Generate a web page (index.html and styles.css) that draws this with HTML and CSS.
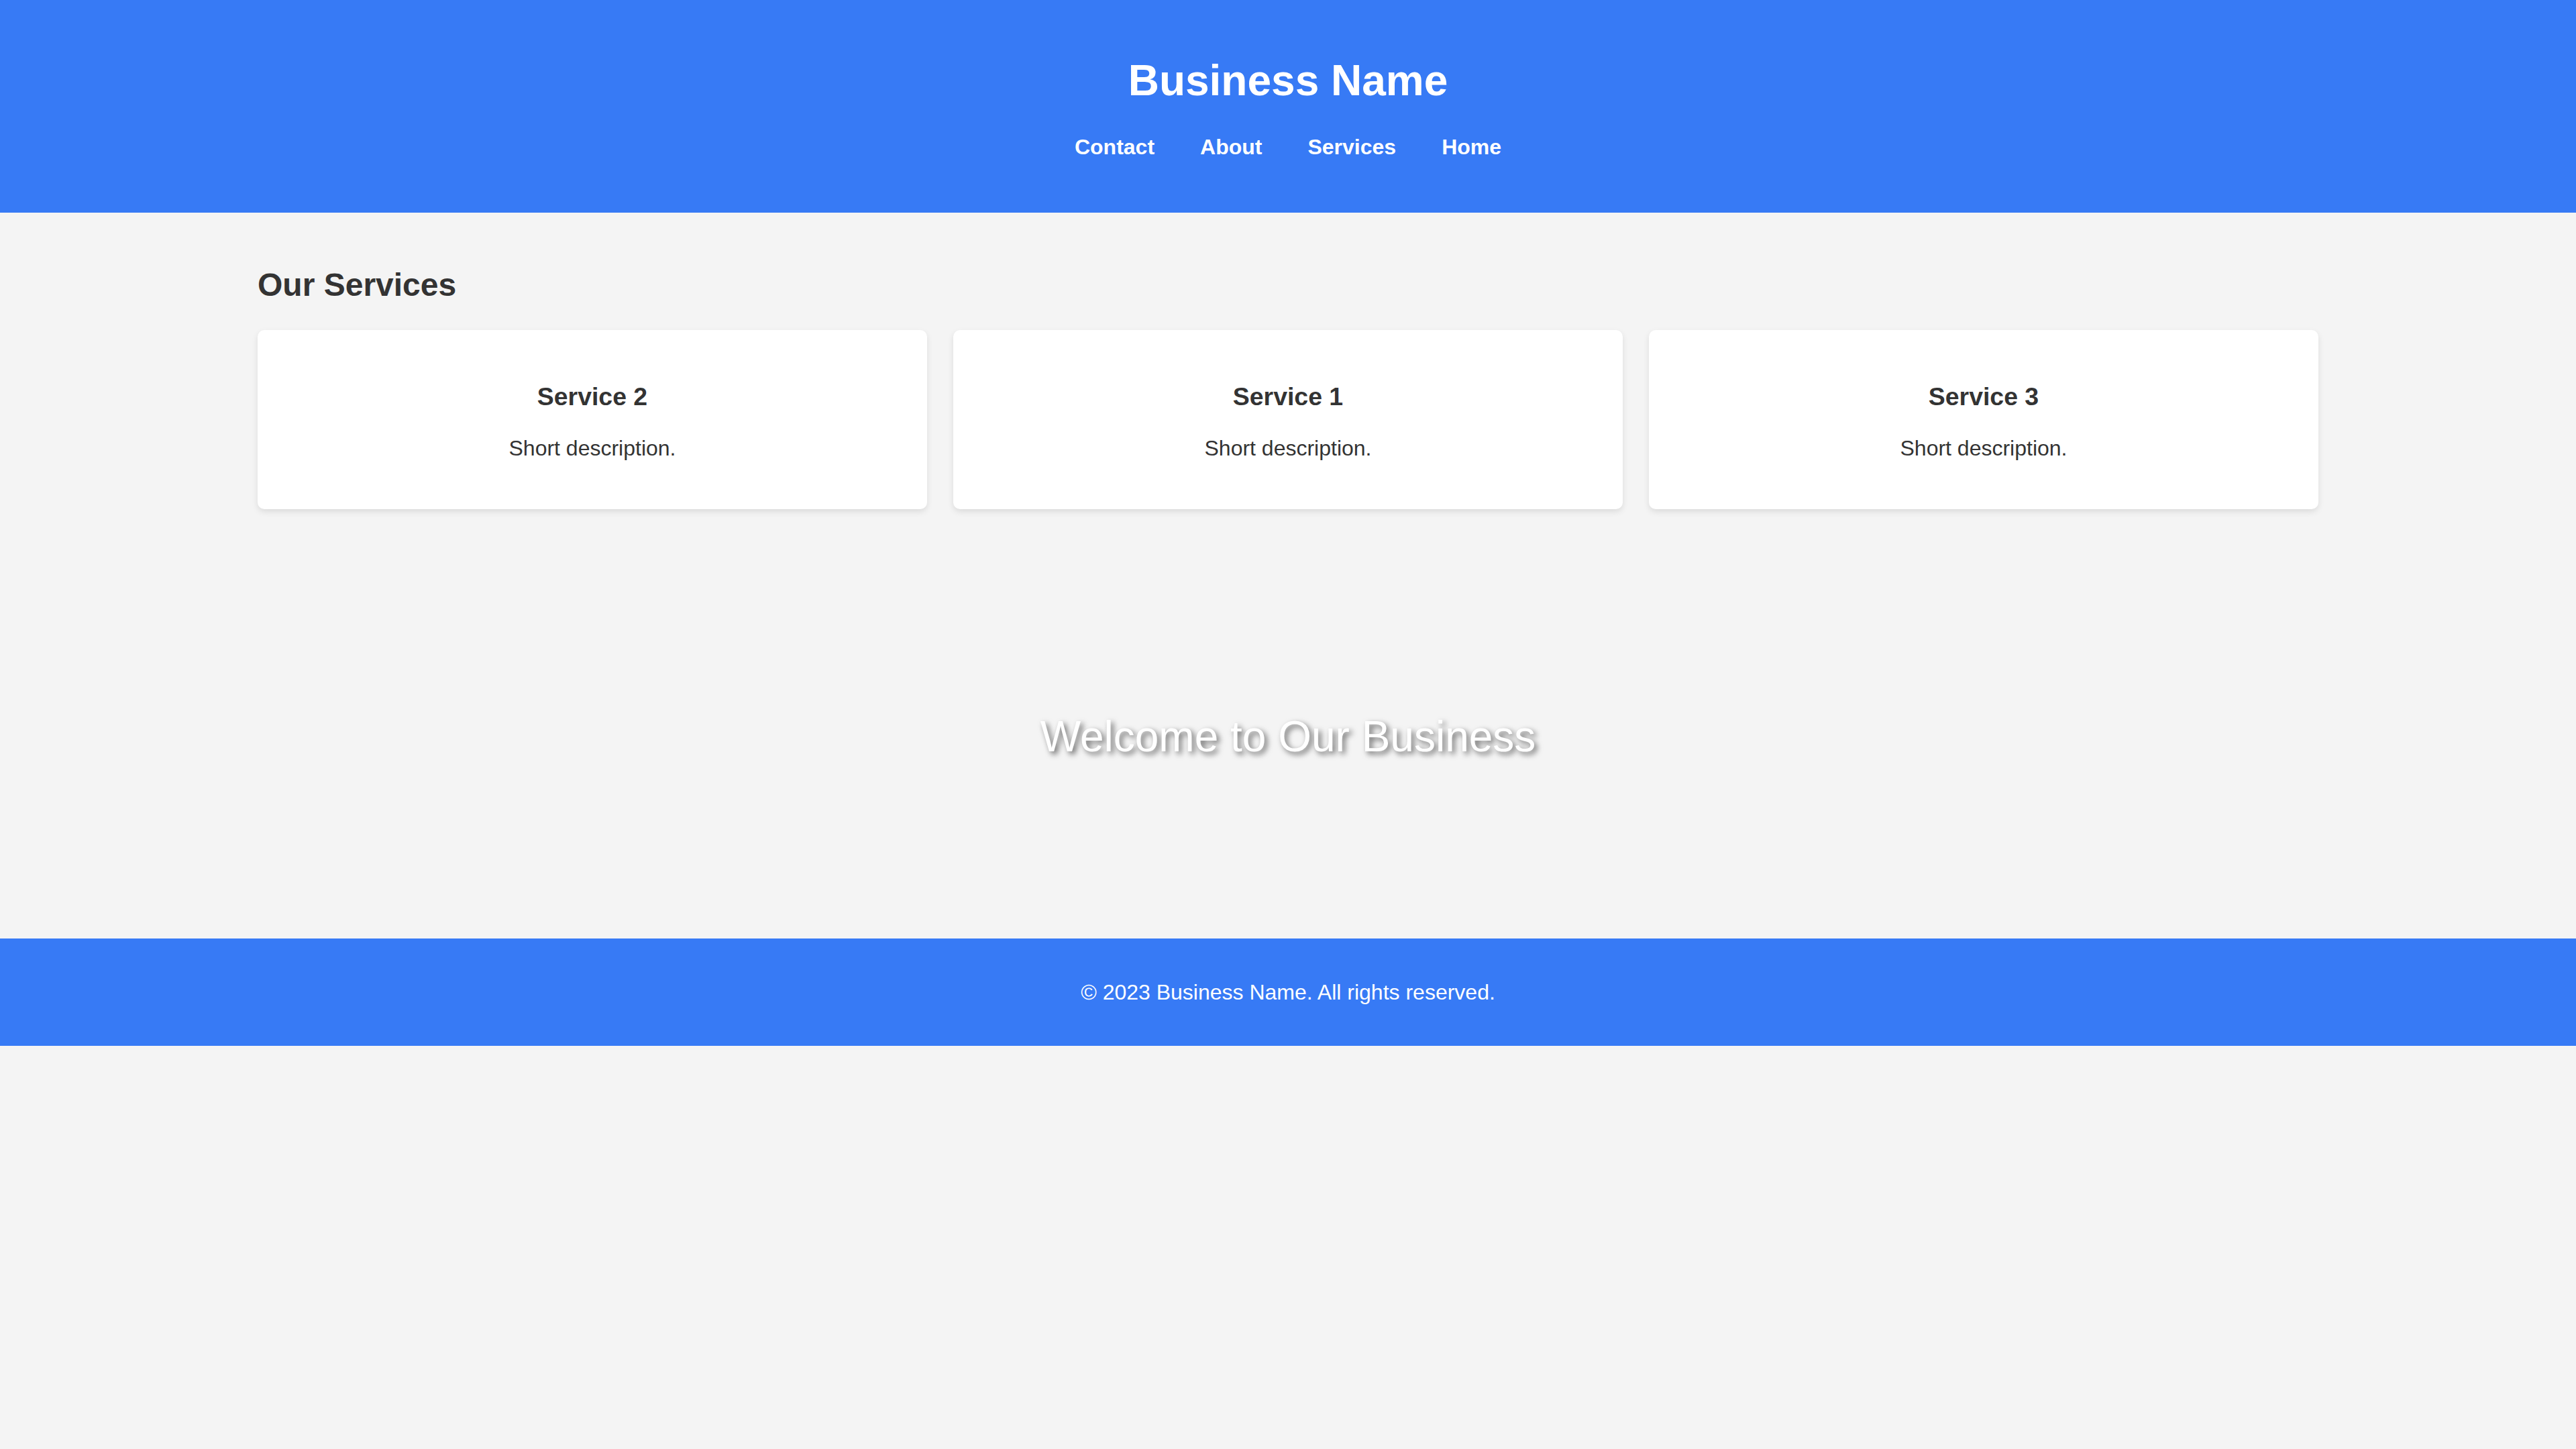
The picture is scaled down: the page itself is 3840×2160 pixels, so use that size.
FILE: index.html
```html
<!DOCTYPE html>
<html lang="en">
<head>
<meta charset="utf-8">
<title>Business Name</title>
<link rel="stylesheet" href="styles.css">
</head>
<body>
<header class="site-header">
  <h1 class="brand">Business Name</h1>
  <nav class="nav">
    <a class="nav-link" href="#contact">Contact</a>
    <a class="nav-link" href="#about">About</a>
    <a class="nav-link" href="#services">Services</a>
    <a class="nav-link" href="#home">Home</a>
  </nav>
</header>
<main class="main">
  <section class="services" id="services">
    <h2 class="section-title">Our Services</h2>
    <div class="cards">
      <div class="card">
        <h3 class="card-title">Service 2</h3>
        <p class="card-text">Short description.</p>
      </div>
      <div class="card">
        <h3 class="card-title">Service 1</h3>
        <p class="card-text">Short description.</p>
      </div>
      <div class="card">
        <h3 class="card-title">Service 3</h3>
        <p class="card-text">Short description.</p>
      </div>
    </div>
  </section>
  <section class="hero" id="home">
    <h2 class="hero-title">Welcome to Our Business</h2>
  </section>
</main>
<footer class="site-footer">
  <p class="footer-text">© 2023 Business Name. All rights reserved.</p>
</footer>
</body>
</html>
```

FILE: styles.css
```css
html, body {
  margin: 0;
  padding: 0;
}
body {
  background: #f4f4f4;
  color: #333;
  font-family: "Liberation Sans", Arial, sans-serif;
  font-size: 32px;
  min-height: 2160px;
}
.site-header {
  background: #377af5;
  color: #fff;
  text-align: center;
  padding: 41px 0 40px;
}
.brand {
  font-size: 64px;
  font-weight: 700;
  margin: 43px 0 43px;
  line-height: 1.149;
}
.nav {
  display: flex;
  justify-content: center;
  gap: 68px;
  margin-bottom: 40px;
  line-height: 1.15;
}
.nav-link {
  color: #fff;
  text-decoration: none;
  font-weight: 700;
  font-size: 32px;
}
.main {
  display: flex;
  flex-direction: column;
}
.services {
  width: 3072px;
  margin: 0 auto;
  padding: 40px 0;
}
.section-title {
  font-size: 48px;
  font-weight: 700;
  margin: 40px 0 40px;
  line-height: 1.149;
  color: #333;
}
.cards {
  display: grid;
  grid-template-columns: repeat(3, 1fr);
  gap: 39px;
}
.card {
  background: #fff;
  border-radius: 10px;
  box-shadow: 0 4px 10px rgba(0, 0, 0, 0.1);
  padding: 40px;
  text-align: center;
}
.card-title {
  font-size: 37.44px;
  font-weight: 700;
  margin: 37.44px 0;
  line-height: 1.149;
  color: #333;
}
.card-text {
  font-size: 32px;
  margin: 32px 0;
  line-height: 1.15;
  color: #333;
}
.hero {
  height: 600px;
  display: flex;
  align-items: center;
  justify-content: center;
}
.hero-title {
  margin: 0;
  font-size: 64px;
  font-weight: 400;
  color: #fff;
  line-height: 1.149;
  text-shadow: 4px 4px 8px rgba(0, 0, 0, 0.6);
}
.site-footer {
  background: #377af5;
  color: #fff;
  text-align: center;
  padding: 62px 0 61px;
}
.footer-text {
  margin: 0;
  font-size: 32px;
  line-height: 1.15;
}
```
